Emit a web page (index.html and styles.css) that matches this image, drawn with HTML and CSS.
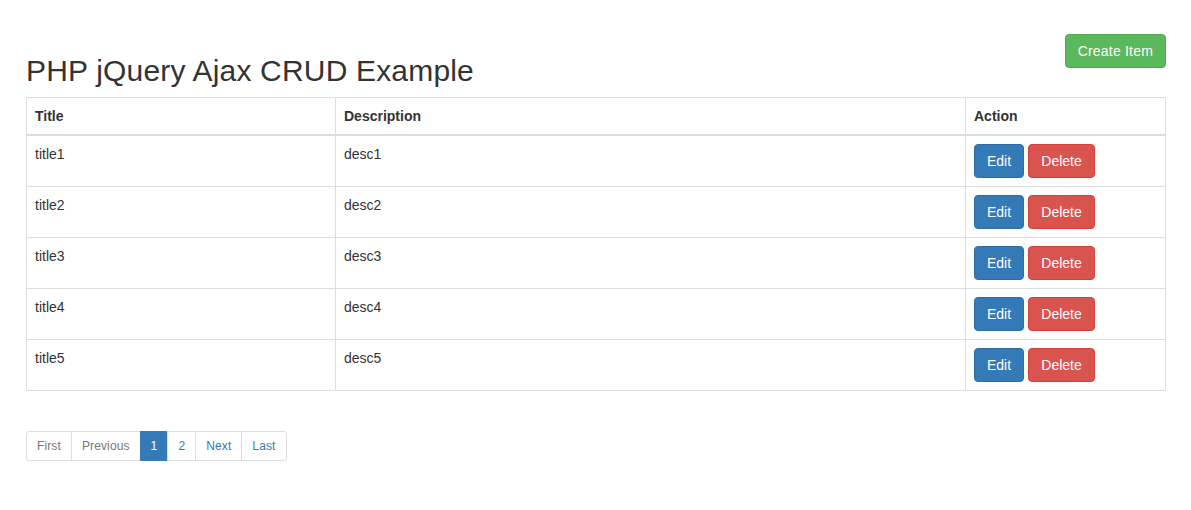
FILE: index.html
```html
<!DOCTYPE html>
<html>
<head>
<meta charset="utf-8">
<link rel="stylesheet" href="styles.css">
</head>
<body>
<div class="container">
  <div class="header">
    <h2 class="title">PHP jQuery Ajax CRUD Example</h2>
    <button class="btn btn-success create">Create Item</button>
  </div>
  <table class="grid">
    <thead>
      <tr><th class="c-title">Title</th><th class="c-desc">Description</th><th class="c-act">Action</th></tr>
    </thead>
    <tbody>
      <tr><td>title1</td><td>desc1</td><td><button class="btn btn-primary">Edit</button> <button class="btn btn-danger">Delete</button></td></tr>
      <tr><td>title2</td><td>desc2</td><td><button class="btn btn-primary">Edit</button> <button class="btn btn-danger">Delete</button></td></tr>
      <tr><td>title3</td><td>desc3</td><td><button class="btn btn-primary">Edit</button> <button class="btn btn-danger">Delete</button></td></tr>
      <tr><td>title4</td><td>desc4</td><td><button class="btn btn-primary">Edit</button> <button class="btn btn-danger">Delete</button></td></tr>
      <tr><td>title5</td><td>desc5</td><td><button class="btn btn-primary">Edit</button> <button class="btn btn-danger">Delete</button></td></tr>
    </tbody>
  </table>
  <ul class="pagination">
    <li class="disabled"><span>First</span></li>
    <li class="disabled"><span>Previous</span></li>
    <li class="active"><span>1</span></li>
    <li><span>2</span></li>
    <li><span>Next</span></li>
    <li><span>Last</span></li>
  </ul>
</div>
</body>
</html>
```

FILE: styles.css
```css
* { box-sizing: border-box; }
html, body { margin: 0; padding: 0; background: #fff; }
body {
  font-family: "Liberation Sans", Arial, sans-serif;
  font-size: 14px;
  line-height: 20px;
  color: #333;
}
.container {
  width: 1140px;
  margin-left: 26px;
}
.header {
  display: flex;
  justify-content: space-between;
  align-items: flex-start;
}
.title {
  margin: 54px 0 10px 0;
  font-size: 30px;
  line-height: 33px;
  font-weight: 500;
  color: #333;
  letter-spacing: 0.18px;
}
.create { margin-top: 34px; letter-spacing: 0.2px; }
.btn {
  display: inline-block;
  font-family: inherit;
  font-size: 14px;
  line-height: 20px;
  padding: 6px 12px;
  border: 1px solid transparent;
  border-radius: 4px;
  color: #fff;
  cursor: pointer;
  vertical-align: middle;
}
.btn-success { background: #5cb85c; border-color: #4cae4c; }
.btn-primary { background: #337ab7; border-color: #2e6da4; min-width: 50px; }
.btn-danger { background: #d9534f; border-color: #d43f3a; min-width: 67px; }
.grid {
  width: 1140px;
  border-collapse: collapse;
  border: 1px solid #ddd;
}
.grid th, .grid td {
  border: 1px solid #ddd;
  padding: 8px;
  text-align: left;
  vertical-align: top;
  line-height: 20px;
}
.grid th {
  font-weight: bold;
  border-bottom-width: 2px;
  vertical-align: bottom;
}
.c-title { width: 309px; }
.c-desc { width: 630px; }
.c-act { width: 200px; }
.pagination {
  display: flex;
  list-style: none;
  margin: 40px 0 0 0;
  padding: 0;
}
.pagination li span {
  display: block;
  padding: 5px 10px;
  font-size: 12px;
  line-height: 18px;
  color: #337ab7;
  border: 1px solid #ddd;
  margin-left: -1px;
  background: #fff;
  letter-spacing: 0.12px;
}
.pagination li:first-child span {
  margin-left: 0;
  border-radius: 3px 0 0 3px;
}
.pagination li:last-child span { border-radius: 0 3px 3px 0; }
.pagination li.disabled span { color: #777; }
.pagination li.active span {
  background: #337ab7;
  border-color: #337ab7;
  color: #fff;
}
```
